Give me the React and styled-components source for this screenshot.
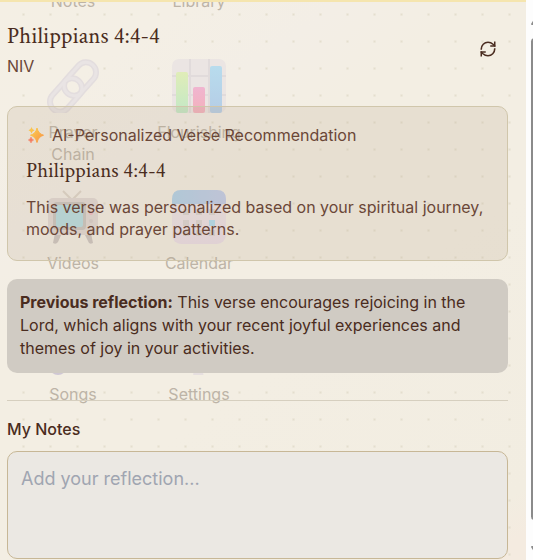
import React from "react";
import styled, { createGlobalStyle } from "styled-components";

const GlobalStyle = createGlobalStyle`
  *, *::before, *::after { box-sizing: border-box; }
  body {
    margin: 0;
    font-family: Inter, "Liberation Sans", sans-serif;
    font-size: 16px;
    color: #4a2c20;
  }
  h1, h2, p { margin: 0; }
`;

const Page = styled.div`
  display: flex;
  min-height: 100vh;
  background: #fdfdfd;
`;

const Panel = styled.main`
  position: relative;
  isolation: isolate;
  flex: 1;
  min-width: 0;
  overflow: hidden;
  padding: 18px 18px 1px 7px;
  border-top: 2px solid #f5e5ae;
  background:
    radial-gradient(circle, #e4dece 0, transparent 2px) 10px -1px / 27px 27px,
    linear-gradient(145deg, #f4efe4 0%, #f4efe5 14%, #f3eee6 26%, #f3eee3 36%, #f3eee3 60%, #f2ede1 92%, #f4ebe0 97%);
`;

const Launcher = styled.div`
  position: absolute;
  z-index: -1;
  top: -74px;
  left: 10px;
  display: grid;
  grid-template-columns: repeat(2, 126px);
  grid-auto-rows: 131px;
`;

const LauncherItem = styled.div`
  display: flex;
  flex-direction: column;
  align-items: center;
  gap: 8px;
  color: #bdb4a7;
  line-height: 22px;
  text-align: center;

  svg { display: block; flex: none; }
  span { width: min-content; }
`;

const Header = styled.header`
  display: flex;
  justify-content: space-between;
  align-items: flex-start;
`;

const Title = styled.h1`
  font-family: "Crimson Text", "Liberation Serif", serif;
  font-size: 23px;
  font-weight: 500;
  line-height: 32px;
`;

const Version = styled.p`
  margin-top: 2px;
  line-height: 24px;
  color: #6b4738;
`;

const RefreshButton = styled.button`
  display: flex;
  margin: 12px 3px 0 0;
  padding: 8px;
  border: 0;
  background: none;
  color: #4a2c20;
`;

const Recommendation = styled.section`
  margin-top: 28px;
  padding: 16px 18px 20px;
  border: 1px solid #d0c6ab;
  border-radius: 10px;
  background: rgba(183, 163, 142, 0.2);
  color: #6b4738;
  line-height: 22px;
`;

const Tag = styled.div`
  display: flex;
  align-items: center;
  gap: 8px;
  line-height: 24px;
`;

const VerseTitle = styled.h2`
  margin: 11px 0 13px;
  font-family: "Crimson Text", "Liberation Serif", serif;
  font-size: 21px;
  font-weight: 500;
  line-height: 25px;
  color: #4a2c20;
`;

const Reflection = styled.p`
  margin-top: 18px;
  padding: 12px 13px 13px;
  border-radius: 10px;
  background: #d0cbc3;
  line-height: 23px;
`;

const Notes = styled.section`
  display: flex;
  flex-direction: column;
  margin-top: 27px;
  padding-top: 16px;
  border-top: 1px solid #d6cfbf;
`;

const NotesLabel = styled.label`
  font-weight: 500;
  line-height: 24px;
`;

const NotesField = styled.textarea`
  display: block;
  width: 100%;
  height: 108px;
  margin-top: 10px;
  padding: 13px;
  border: 1px solid #c7b796;
  border-radius: 10px;
  background: #ebe8e3;
  font-family: inherit;
  font-size: 18px;
  line-height: 27px;
  color: #4a2c20;
  resize: none;

  &::placeholder { color: #a0a5b1; opacity: 1; }
`;

const Rail = styled.div`
  display: flex;
  flex-direction: column;
  gap: 13px;
  flex: none;
  width: 7px;
  padding: 18px 0 7px 5px;
  overflow: hidden;

  svg { display: block; flex: none; }
`;

const Thumb = styled.div`
  flex: 1;
  width: 7px;
  border-radius: 4px;
  background: #8b8b8b;
`;

const BottomArrowSlot = styled.div`
  margin-top: 13px;
`;

const iconProps = { width: 54, height: 54, viewBox: "0 0 54 54", "aria-hidden": true };

function ChainIcon() {
  return (
    <svg {...iconProps} fill="none">
      <g stroke="#e3ddde" strokeWidth="6">
        <rect x="15" y="10" width="38" height="20" rx="10" transform="rotate(-48 34 20)" />
        <rect x="1" y="26" width="38" height="20" rx="10" transform="rotate(-48 20 36)" />
      </g>
      <g stroke="#e9e4e4" strokeWidth="3">
        <rect x="15" y="10" width="38" height="20" rx="10" transform="rotate(-48 34 20)" />
        <rect x="1" y="26" width="38" height="20" rx="10" transform="rotate(-48 20 36)" />
      </g>
    </svg>
  );
}

function ChartIcon() {
  return (
    <svg {...iconProps}>
      <defs>
        <linearGradient id="barGreen" x2="0" y2="1"><stop stopColor="#e0edb8" /><stop offset="1" stopColor="#c3e8c6" /></linearGradient>
        <linearGradient id="barPink" x2="0" y2="1"><stop stopColor="#f0b5d0" /><stop offset="1" stopColor="#f3b1bc" /></linearGradient>
        <linearGradient id="barBlue" x2="0" y2="1"><stop stopColor="#b8dced" /><stop offset="1" stopColor="#b5cde6" /></linearGradient>
      </defs>
      <rect width="54" height="54" rx="7" fill="#ebe5e3" />
      <path d="M18 0V54M37 0V54M0 17H54M0 36H54" stroke="#e1dbdb" strokeWidth="2" />
      <rect x="4" y="13" width="12" height="41" rx="2" fill="url(#barGreen)" />
      <rect x="21" y="28" width="12" height="26" rx="2" fill="url(#barPink)" />
      <rect x="38" y="7" width="12" height="47" rx="2" fill="url(#barBlue)" />
    </svg>
  );
}

function TvIcon() {
  return (
    <svg {...iconProps}>
      <path d="M17 1L26 10L35 1" fill="none" stroke="#dcd4c9" strokeWidth="2" />
      <path d="M9 43h7l-4 9q-2 3-5 1zM38 43h7l2 10q-4 2-5-2z" fill="#cbc4c0" />
      <rect x="2" y="8" width="50" height="37" rx="5" fill="#e0d8d4" />
      <rect x="7" y="12" width="33" height="28" rx="4" fill="#c9c3be" />
      <rect x="10" y="15" width="27" height="22" rx="2" fill="#b6dce2" />
      <circle cx="45" cy="23" r="2" fill="#efb8c2" />
      <circle cx="45" cy="31" r="2" fill="#d6cdca" />
    </svg>
  );
}

function CalendarIcon() {
  return (
    <svg {...iconProps}>
      <defs>
        <linearGradient id="calTop"><stop stopColor="#afd1e9" /><stop offset="1" stopColor="#c1cbe9" /></linearGradient>
        <linearGradient id="calBase" x2="0" y2="1"><stop stopColor="#ece5e4" /><stop offset="1" stopColor="#eadde7" /></linearGradient>
      </defs>
      <rect width="54" height="54" rx="9" fill="url(#calBase)" />
      <path d="M0 14V9Q0 0 9 0H45Q54 0 54 9V14Z" fill="url(#calTop)" />
      <path d="M24 19h6v6h-6zM37 19h6v6h-6zM11 30h6v6h-6zM24 30h6v6h-6zM11 40h6v6h-6zM24 40h6v6h-6zM37 40h6v6h-6zM11 19h6v6h-6z" fill="#dad4d3" />
      <rect x="37" y="30" width="6" height="6" fill="#b0ddf1" />
    </svg>
  );
}

function MusicIcon() {
  return (
    <svg {...iconProps}>
      <path d="M18 45V8L46 2V39" fill="none" stroke="#cfc7d4" strokeWidth="4" />
      <ellipse cx="12" cy="47" rx="8" ry="7" fill="#cfc7d4" />
      <ellipse cx="38" cy="40" rx="8" ry="7" fill="#cfc7d4" />
    </svg>
  );
}

function GearIcon() {
  return (
    <svg {...iconProps} fill="none" stroke="#e6dfdf">
      <circle cx="27" cy="27" r="15" strokeWidth="9" />
      <circle cx="27" cy="27" r="23" strokeWidth="9" strokeDasharray="9 9" strokeDashoffset="-14" />
    </svg>
  );
}

function BlankIcon() {
  return <svg {...iconProps} />;
}

function Sparkles() {
  return (
    <svg width="18" height="18" viewBox="0 0 18 18" aria-hidden="true">
      <defs>
        <linearGradient id="spark" x1="0" y1="0" x2="1" y2="1"><stop stopColor="#fbd24e" /><stop offset="1" stopColor="#f88f45" /></linearGradient>
      </defs>
      <path d="M11 2Q12.3 7.7 17.5 9.2Q12.3 10.7 11 16.5Q9.7 10.7 4.5 9.2Q9.7 7.7 11 2Z" fill="url(#spark)" stroke="url(#spark)" strokeWidth="1" strokeLinejoin="round" />
      <path d="M5.5 1Q6 3.5 8.5 4.3Q6 5 5.5 7.5Q5 5 2.5 4.3Q5 3.5 5.5 1Z" fill="#fac34e" />
      <path d="M5 11Q5.5 13.3 7.7 14Q5.5 14.7 5 17Q4.5 14.7 2.3 14Q4.5 13.3 5 11Z" fill="#f47e63" stroke="#f47e63" strokeWidth="0.5" />
    </svg>
  );
}

function RefreshIcon() {
  return (
    <svg width="18" height="18" viewBox="0 0 24 24" fill="none" stroke="currentColor" strokeWidth="2" strokeLinecap="square" aria-hidden="true">
      <path d="M3 12a9 9 0 0 1 9-9 9.8 9.8 0 0 1 6.7 2.7L21 8" />
      <path d="M21 3v5h-5" />
      <path d="M21 12a9 9 0 0 1-9 9 9.8 9.8 0 0 1-6.7-2.7L3 16" />
      <path d="M8 16H3v5" />
    </svg>
  );
}

function Arrow({ down }) {
  return (
    <svg width="8" height="7" viewBox="0 0 8 7" aria-hidden="true">
      <path d={down ? "M0 1Q0 0 1 0H7Q8 0 8 1L5 6Q4 7 3 6Z" : "M0 6Q0 7 1 7H7Q8 7 8 6L5 1Q4 0 3 1Z"} fill="#8b8b8b" />
    </svg>
  );
}

const apps = [
  ["Notes", BlankIcon],
  ["Library", BlankIcon],
  ["Prayer Chain", ChainIcon],
  ["Flourishing", ChartIcon],
  ["Videos", TvIcon],
  ["Calendar", CalendarIcon],
  ["Songs", MusicIcon],
  ["Settings", GearIcon],
];

export default function App() {
  return (
    <Page>
      <GlobalStyle />
      <Panel>
        <Launcher>
          {apps.map(([name, Icon]) => (
            <LauncherItem key={name}>
              <Icon />
              <span>{name}</span>
            </LauncherItem>
          ))}
        </Launcher>
        <Header>
          <div>
            <Title>Philippians 4:4-4</Title>
            <Version>NIV</Version>
          </div>
          <RefreshButton type="button" aria-label="Refresh verse">
            <RefreshIcon />
          </RefreshButton>
        </Header>
        <Recommendation>
          <Tag>
            <Sparkles />
            <span>AI-Personalized Verse Recommendation</span>
          </Tag>
          <VerseTitle>Philippians 4:4-4</VerseTitle>
          <p>This verse was personalized based on your spiritual journey, moods, and prayer patterns.</p>
        </Recommendation>
        <Reflection>
          <strong>Previous reflection:</strong> This verse encourages rejoicing in the Lord, which
          aligns with your recent joyful experiences and themes of joy in your activities.
        </Reflection>
        <Notes>
          <NotesLabel htmlFor="notes">My Notes</NotesLabel>
          <NotesField id="notes" placeholder="Add your reflection..." />
        </Notes>
      </Panel>
      <Rail aria-hidden="true">
        <Arrow />
        <Thumb />
        <BottomArrowSlot><Arrow down /></BottomArrowSlot>
      </Rail>
    </Page>
  );
}
